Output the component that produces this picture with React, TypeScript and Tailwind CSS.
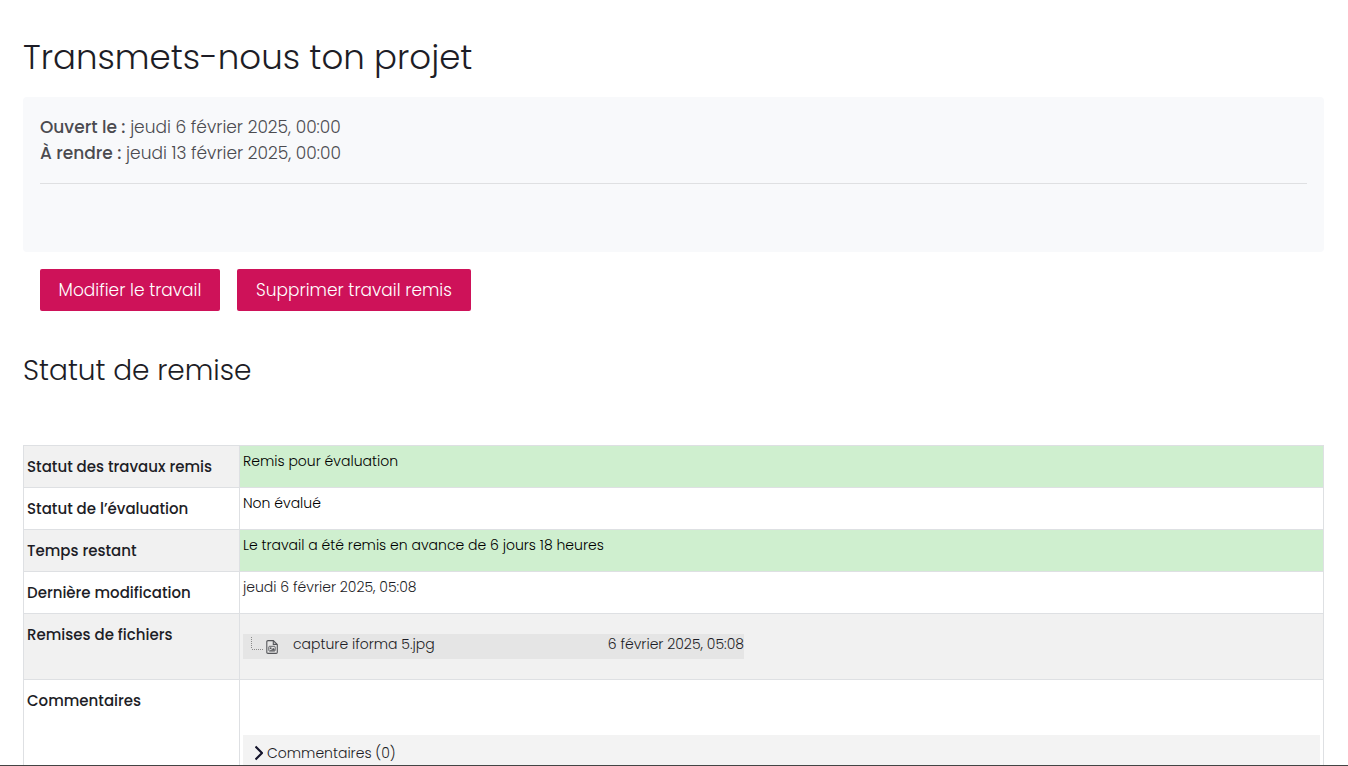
import type { ReactNode } from "react";

type StatusRow = {
  label: string;
  value: ReactNode;
  rowClass?: string;
  valueClass?: string;
};

function TreeBranch() {
  return (
    <svg className="mb-1 h-4 w-4" viewBox="0 0 16 16" fill="none" stroke="#8a8a8a" strokeDasharray="1 1" aria-hidden="true">
      <path d="M1.500 0V12" />
      <path d="M2 12.500H14" />
    </svg>
  );
}

function ImageFileIcon() {
  return (
    <svg className="h-4 w-3" viewBox="0 0 12 16" fill="none" stroke="#55565a" strokeWidth="1.100" aria-hidden="true">
      <path d="M2 1.600H7.300L11.300 5.600V13.200Q11.300 14.400 10.200 14.400H2Q0.800 14.400 0.800 13.200V2.800Q0.800 1.600 2 1.600Z" />
      <path d="M7.300 1.800V5.400H11" />
      <rect x="2.800" y="7.300" width="6.400" height="4.800" rx="0.800" strokeWidth="0.900" />
      <circle cx="4.700" cy="9.200" r="0.900" fill="#55565a" stroke="none" />
      <path d="M4 11.500L6.200 10.500L7.200 9L8.500 10.500V11.500Z" fill="#55565a" strokeWidth="0.400" />
    </svg>
  );
}

function FileTree() {
  return (
    <div className="mt-[17px] mb-5 flex h-[25px] w-[501px] max-w-full items-center bg-[#e5e5e5] pl-[7px] leading-[21px]">
      <TreeBranch />
      <ImageFileIcon />
      <a href="#fichier" className="ml-[15px] pb-1">
        capture iforma 5.jpg
      </a>
      <span className="ml-auto pb-1">6 février 2025, 05:08</span>
    </div>
  );
}

function Comments() {
  return (
    <div className="mt-[52px] bg-[#f3f3f3] pt-1 pb-10">
      <button type="button" className="flex h-7 items-center gap-1 pl-3">
        <svg className="h-4 w-2" viewBox="0 0 8 16" fill="none" stroke="#14142b" strokeWidth="2.200" aria-hidden="true">
          <path d="M0.500 1.500L7 8L0.500 14.500" />
        </svg>
        Commentaires (0)
      </button>
    </div>
  );
}

const rows: StatusRow[] = [
  { label: "Statut des travaux remis", value: "Remis pour évaluation", rowClass: "bg-[#f1f1f1]", valueClass: "bg-[#cfefcf] text-black" },
  { label: "Statut de l’évaluation", value: "Non évalué", valueClass: "text-black" },
  { label: "Temps restant", value: "Le travail a été remis en avance de 6 jours 18 heures", rowClass: "bg-[#f1f1f1]", valueClass: "bg-[#cfefcf] text-black" },
  { label: "Dernière modification", value: "jeudi 6 février 2025, 05:08" },
  { label: "Remises de fichiers", value: <FileTree />, rowClass: "bg-[#f1f1f1]" },
  { label: "Commentaires", value: <Comments /> },
];

export default function App() {
  return (
    <main className="h-screen overflow-hidden border-b border-[#444444] bg-white pt-8 pr-6 pl-[23px] font-['Poppins','Inter',sans-serif] font-light text-[#1d1d26]">
      <h1 className="text-[34px] leading-[50px]">Transmets-nous ton projet</h1>

      <section className="mt-[15px] h-[155px] rounded-[4px] bg-[#f8f9fb] px-[17px] pt-[17px] text-[17px] leading-[26px] text-[#4b4b50]">
        <div className="border-b border-[#dfe0e2] pb-[17px]">
          <p>
            <strong className="font-medium">Ouvert le :</strong> jeudi 6 février 2025, 00:00
          </p>
          <p>
            <strong className="font-medium">À rendre :</strong> jeudi 13 février 2025, 00:00
          </p>
        </div>
      </section>

      <div className="mt-[17px] flex gap-[17px] pl-[17px] text-[17px] text-white">
        <button type="button" className="h-[42px] min-w-[180px] rounded-[2px] bg-[#ce1259] px-4 pt-0.5">
          Modifier le travail
        </button>
        <button type="button" className="h-[42px] min-w-[234px] rounded-[2px] bg-[#ce1259] px-4 pt-0.5">
          Supprimer travail remis
        </button>
      </div>

      <h2 className="mt-10 text-[28px] leading-[40px]">Statut de remise</h2>

      <table className="mt-[54px] w-full table-fixed border-collapse text-left text-[15px] leading-6">
        <colgroup>
          <col className="w-[216px]" />
          <col />
        </colgroup>
        <tbody>
          {rows.map((row) => (
            <tr key={row.label} className={row.rowClass}>
              <th scope="row" className="h-[42px] border border-[#dee0e3] px-[3px] pt-[9px] align-top font-medium whitespace-nowrap">
                {row.label}
              </th>
              <td className={`border border-[#dee0e3] px-[3px] pt-[3px] align-top text-sm leading-6 ${row.valueClass ?? ""}`}>{row.value}</td>
            </tr>
          ))}
        </tbody>
      </table>
    </main>
  );
}
